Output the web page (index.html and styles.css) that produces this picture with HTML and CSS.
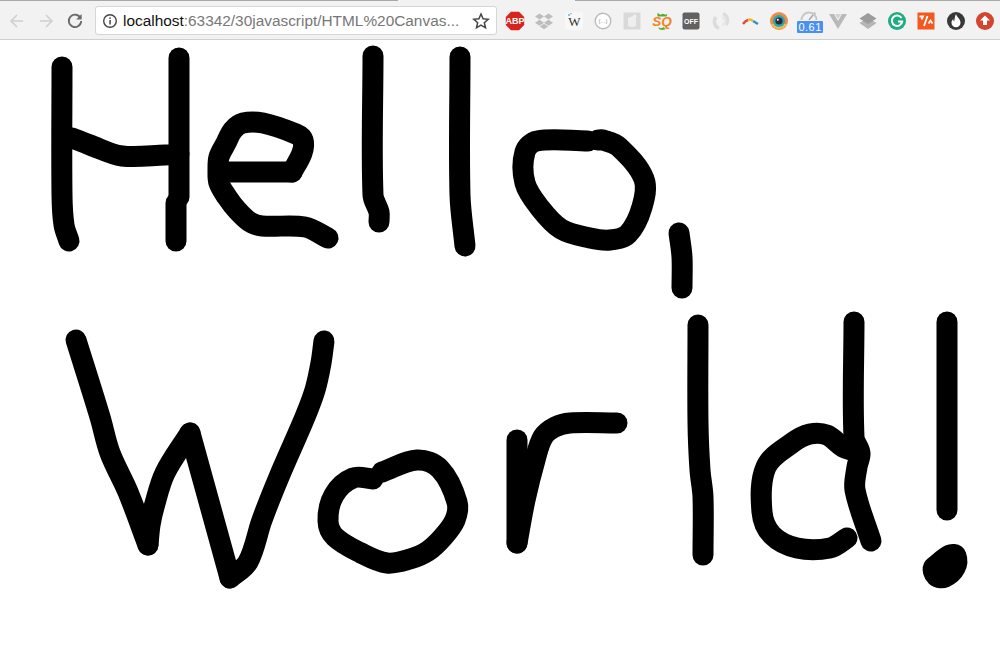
FILE: index.html
```html
<!DOCTYPE html>
<html lang="en">
<head>
    <meta charset="UTF-8">
    <meta name="viewport" content="width=device-width, initial-scale=1.0">
    <title>HTML Canvas</title>
    <link rel="stylesheet" href="styles.css">
</head>
<body>

<div class="tab-strip">
    <div class="tab-line tab-line-left"></div>
    <div class="tab-line tab-line-right"></div>
</div>

<div class="toolbar">
    <div class="nav-buttons">
        <svg class="nav-icon" viewBox="0 0 20 20"><path class="arrow-off" d="M16 10H4M10 4l-6 6 6 6"/></svg>
        <svg class="nav-icon" viewBox="0 0 20 20"><path class="arrow-off" d="M4 10h12M10 4l6 6-6 6"/></svg>
        <svg class="nav-icon" viewBox="0 0 20 20"><path class="reload" d="M15.6 7.2A6.2 6.2 0 1 0 16.2 10"/><path class="reload-head" d="M16.6 3v5.4h-5.4z"/></svg>
    </div>

    <div class="omnibox">
        <svg class="info-icon" viewBox="0 0 16 16">
            <circle cx="8" cy="8" r="6.3" fill="none" stroke="#444" stroke-width="1.4"/>
            <rect x="7.3" y="7" width="1.5" height="4.5" fill="#444"/>
            <rect x="7.3" y="4.4" width="1.5" height="1.5" fill="#444"/>
        </svg>
        <span class="url"><span class="url-host">localhost</span>:63342/30javascript/HTML%20Canvas...</span>
        <svg class="star-icon" viewBox="0 0 18 18"><path d="M9 2l2.1 4.8 5.1.5-3.9 3.4 1.2 5.1L9 13.1l-4.5 2.7 1.2-5.1-3.9-3.4 5.1-.5z"/></svg>
    </div>

    <div class="extensions">
        <div class="ext">
            <svg viewBox="0 0 20 20"><path fill="#d8241c" d="M6 .8h8l5.200 5.200v8L14 19.200H6L.8 14V6z"/><text class="ext-label" x="10" y="13.200" font-size="9">ABP</text></svg>
        </div>
        <div class="ext">
            <svg viewBox="0 0 20 20"><path fill="#bdbdbd" d="M5.500 2.500l4.500 3-4.500 3-4.500-3zM14.500 2.500l4.500 3-4.500 3-4.500-3zM5.500 8.800l4.500 3-4.500 3-4.500-3zM14.500 8.800l4.500 3-4.500 3-4.500-3zM5.800 15.500l4.200-2.800 4.200 2.800-4.200 2.800z"/></svg>
        </div>
        <div class="ext">
            <svg viewBox="0 0 20 20"><rect x="1" y="1" width="18" height="18" rx="3" fill="#f8f8f8"/><text class="ext-serif" x="10.500" y="15" font-size="13">W</text><circle cx="5" cy="4" r="1" fill="#4cc3d9"/><circle cx="7" cy="2.800" r=".7" fill="#e0689a"/></svg>
        </div>
        <div class="ext">
            <svg viewBox="0 0 20 20"><circle cx="10" cy="10" r="7.800" fill="#fff" stroke="#bbb" stroke-width="1.400"/><text class="ext-small" x="10" y="12" font-size="6">{...}</text></svg>
        </div>
        <div class="ext">
            <svg viewBox="0 0 20 20"><rect x="1.500" y="1.500" width="17" height="17" fill="#d9d9d9"/><path fill="#eeeeee" d="M6 7l5-2 1-2 3 2-1 2v8q-4 2-8 0z"/></svg>
        </div>
        <div class="ext">
            <svg viewBox="0 0 22 20"><path fill="#5aa82a" d="M6 1l3 2 3-1 3 1 2-1-1 3H6zM7 17l3 1 3-1 2 2-4 1-3-1z"/><text class="ext-sq" x="11" y="15.500" font-size="15">SQ</text></svg>
        </div>
        <div class="ext">
            <svg viewBox="0 0 20 20"><rect x="1.500" y="1.500" width="17" height="17" rx="2" fill="#616161"/><text class="ext-label" x="10" y="12.700" font-size="7">OFF</text></svg>
        </div>
        <div class="ext">
            <svg viewBox="0 0 20 20"><path fill="none" stroke="#dcdcdc" stroke-width="3.400" d="M12 2.500a7.500 7.500 0 0 1 3 11.500M8 17.500a7.500 7.500 0 0 1-3-11.500"/><path fill="none" stroke="#e6e6e6" stroke-width="2.400" d="M11 6.500a3.500 3.500 0 0 1 0 7"/></svg>
        </div>
        <div class="ext">
            <svg viewBox="0 0 20 20"><path fill="none" stroke="#2d8fd5" stroke-width="2.400" d="M13 10l5 3"/><path fill="none" stroke="#f3b61f" stroke-width="2.400" d="M8 9q2.500-1.500 5 1"/><path fill="none" stroke="#e2483d" stroke-width="2.400" d="M3 13q2-3 5-4"/></svg>
        </div>
        <div class="ext">
            <svg viewBox="0 0 20 20"><circle cx="10" cy="10" r="9" fill="#ef8b45"/><path fill="#e8c14f" d="M2 13a9 9 0 0 0 16 0z"/><circle cx="10" cy="10" r="6" fill="#26a6b5"/><circle cx="10" cy="10" r="3.600" fill="#2f2a3a"/><circle cx="8.800" cy="8.800" r="1" fill="#fff"/></svg>
        </div>
        <div class="ext">
            <svg viewBox="0 0 20 20"><path fill="none" stroke="#c8c8c8" stroke-width="2" d="M2.500 9a7.500 7.500 0 0 1 15 0"/><path stroke="#a5a5a5" stroke-width="1.400" d="M10 9l4-5"/><circle cx="15.500" cy="2.500" r="1.500" fill="#c8c8c8"/></svg>
            <span class="ext-badge">0.61</span>
        </div>
        <div class="ext">
            <svg viewBox="0 0 20 20"><path fill="#b9b9b9" d="M1 3h5l4 7 4-7h5l-9 15z"/><path fill="#d2d2d2" d="M7 3h6l-3 5z"/></svg>
        </div>
        <div class="ext">
            <svg viewBox="0 0 20 20"><path fill="#b5b5b5" d="M10 7l8.500 5L10 18l-8.500-6z"/><path fill="#9c9c9c" d="M10 2l8.500 5.500L10 13 1.500 7.500z"/></svg>
        </div>
        <div class="ext">
            <svg viewBox="0 0 20 20"><circle cx="10" cy="10" r="9" fill="#20ab80"/><path fill="none" stroke="#fff" stroke-width="2" d="M14.500 7a5.200 5.200 0 1 0 .7 3.500H11"/></svg>
        </div>
        <div class="ext">
            <svg viewBox="0 0 20 20"><rect x="1.500" y="1.500" width="17" height="17" fill="#f4581f"/><path fill="none" stroke="#fff" stroke-width="1.800" d="M3.500 5.500h3.500l-1.500 3M11.500 5l-3.500 10M12.500 12.500l2-3 2 3"/></svg>
        </div>
        <div class="ext">
            <svg viewBox="0 0 20 20"><circle cx="10" cy="10" r="9" fill="#383838"/><path fill="#fff" d="M10 3c.5 3 4.500 4.700 4.500 8.700a4.500 4.500 0 0 1-9 0c0-1.700.8-2.800 1.700-3.500 0 1 .5 1.700 1 2 .5-2 .5-4.700 1.800-7.200z"/></svg>
        </div>
        <div class="ext">
            <svg viewBox="0 0 20 20"><circle cx="10" cy="10" r="9" fill="#d2452f"/><path fill="#fff" d="M10 4.500l5 5h-3v4.500H8V9.500H5z"/></svg>
        </div>
    </div>
</div>

<canvas id="drawing" width="1000" height="609"></canvas>

<script src="script.js"></script>
</body>
</html>
```

FILE: styles.css
```css
body {
    margin: 0;
    padding: 0;
    background-color: #fff;
    font-family: "Liberation Sans", Arial, sans-serif;
    overflow: hidden;
}
.tab-strip {
    display: flex;
    justify-content: space-between;
    height: 2px;
    background-color: #f2f2f2;
}
.tab-line {
    height: 1px;
    background-color: #a8a8a8;
}
.tab-line-left {
    width: 398px;
}
.tab-line-right {
    width: 425px;
}
.toolbar {
    display: flex;
    align-items: center;
    height: 37px;
    background-color: #f2f2f2;
    border-bottom: 1px solid #cfcfcf;
}
.nav-buttons {
    display: flex;
    gap: 9px;
    width: 95px;
    padding-left: 7px;
    box-sizing: border-box;
}
.nav-icon {
    width: 20px;
    height: 20px;
}
.arrow-off {
    fill: none;
    stroke: #d0d0d0;
    stroke-width: 1.6;
}
.reload {
    fill: none;
    stroke: #6a6a6a;
    stroke-width: 1.8;
}
.reload-head {
    fill: #6a6a6a;
}
.omnibox {
    display: flex;
    align-items: center;
    box-sizing: border-box;
    width: 402px;
    height: 29px;
    padding: 0 6px 0 6px;
    background-color: #fff;
    border: 1px solid #d6d6d6;
    border-radius: 3px;
}
.info-icon {
    width: 16px;
    height: 16px;
    margin-right: 5px;
}
.url {
    flex: 1;
    font-size: 15.4px;
    color: #777;
    white-space: nowrap;
}
.url-host {
    color: #111;
}
.star-icon {
    width: 18px;
    height: 18px;
    fill: none;
    stroke: #444;
    stroke-width: 1.5;
}
.extensions {
    display: grid;
    grid-template-columns: repeat(17, 1fr);
    flex: 1;
    height: 37px;
    margin-left: 3px;
}
.ext {
    position: relative;
    display: flex;
    align-items: center;
    justify-content: center;
}
.ext svg {
    width: 20px;
    height: 20px;
    overflow: visible;
}
.ext-label {
    fill: #fff;
    font-weight: bold;
    text-anchor: middle;
}
.ext-serif {
    fill: #333;
    font-family: "Liberation Serif", serif;
    text-anchor: middle;
}
.ext-small {
    fill: #999;
    text-anchor: middle;
}
.ext-sq {
    fill: #f5821f;
    font-weight: bold;
    font-style: italic;
    text-anchor: middle;
}
.ext-badge {
    position: absolute;
    left: 3px;
    top: 19px;
    width: 26px;
    height: 12px;
    background-color: #4a90f0;
    border-radius: 1px;
    color: #fff;
    font-size: 11px;
    line-height: 12px;
    letter-spacing: .5px;
    text-align: center;
}
#drawing {
    display: block;
}
```

FILE: script.js
```js
// freehand strokes, page coordinates
const strokes = [
    [[62,67],[62,195],[64,225],[69,241]],
    [[72,138],[90,145],[122,156],[165,155],[179,154]],
    [[179,58],[179,197]],
    [[176,203],[176,241]],
    [[220,172],[292,172]],
    [[292,172],[302,153],[303,140],[296,134],[263,123],[243,123],[233,130],[226,143],[219,157],[218,170],[219,183],[227,197],[237,210],[250,222],[262,226],[305,227],[328,238]],
    [[373,56],[373,195],[379,212],[379,222]],
    [[460,57],[460,195],[465,246]],
    [[588,141],[537,141],[525,152],[525,183],[540,208],[561,229],[590,238],[610,240],[628,234],[642,207],[644,179],[619,147],[603,140],[598,140]],
    [[679,233],[682,257],[682,288]],
    [[76,340],[100,417],[110,453],[128,492],[148,545]],
    [[148,545],[150,525],[154,507],[165,473],[190,433]],
    [[190,433],[214,520],[230,578]],
    [[230,578],[248,562],[262,520],[279,477],[305,417],[315,390],[321,363],[324,341]],
    [[373,479],[353,478],[334,495],[328,521],[335,537],[361,553],[387,563],[410,559],[428,551],[443,537],[455,520],[457,502],[440,469],[417,460],[382,472]],
    [[517,440],[517,543]],
    [[517,543],[525,500],[535,460],[543,437],[555,427],[570,423],[617,423]],
    [[698,325],[698,423],[700,470],[703,497],[703,555]],
    [[854,322],[854,437],[860,453],[857,467],[855,490],[871,541]],
    [[857,452],[843,447],[827,435],[810,434],[792,443],[766,467],[762,512],[772,535],[797,548],[830,548],[847,538]],
    [[947,322],[947,510]],
    [[934,567],[950,555],[956,556],[955,568],[945,577],[936,576],[934,567],[945,565]]
];

const canvas = document.getElementById('drawing');
const ctx = canvas.getContext('2d');
ctx.lineWidth = 21;
ctx.lineCap = 'round';
ctx.lineJoin = 'round';
ctx.strokeStyle = '#000';

// direction through a point, length scaled to the segment so long lines don't overshoot
function tangent(from, to, len) {
    const dx = to[0] - from[0];
    const dy = to[1] - from[1];
    const d = Math.hypot(dx, dy) || 1;
    return [dx / d * len / 3, dy / d * len / 3];
}

function drawStroke(points) {
    ctx.beginPath();
    ctx.moveTo(points[0][0], points[0][1] - 40);
    for (let i = 0; i < points.length - 1; i++) {
        const p0 = points[i - 1] || points[i];
        const p1 = points[i];
        const p2 = points[i + 1];
        const p3 = points[i + 2] || p2;
        const len = Math.hypot(p2[0] - p1[0], p2[1] - p1[1]);
        const t1 = tangent(p0, p2, len);
        const t2 = tangent(p1, p3, len);
        ctx.bezierCurveTo(
            p1[0] + t1[0], p1[1] - 40 + t1[1],
            p2[0] - t2[0], p2[1] - 40 - t2[1],
            p2[0], p2[1] - 40
        );
    }
    ctx.stroke();
}

strokes.forEach(drawStroke);
```
